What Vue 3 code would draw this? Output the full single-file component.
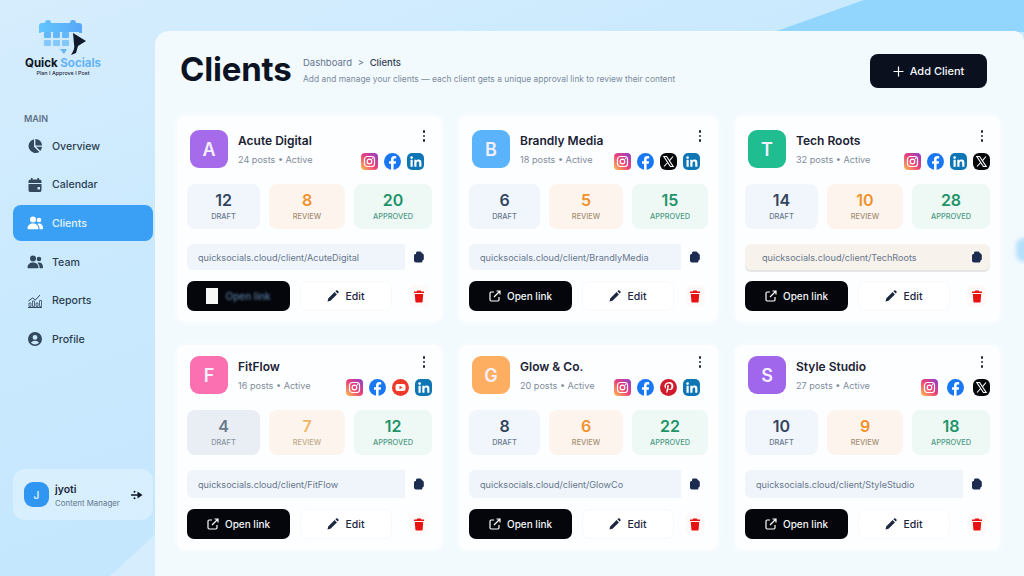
<script setup>
import { ref } from 'vue'

defineOptions({
  name: 'ClientsView'
})

const navItems = ref([
  { label: 'Overview', icon: 'pie' },
  { label: 'Calendar', icon: 'calendar' },
  { label: 'Clients', icon: 'users', active: true },
  { label: 'Team', icon: 'users' },
  { label: 'Reports', icon: 'chart' },
  { label: 'Profile', icon: 'profile' }
])

const clients = ref([
  { name: 'Acute Digital', letter: 'A', color: '#a56bea', posts: 24, draft: 12, review: 8, approved: 20, slug: 'AcuteDigital', socials: ['ig', 'fb', 'li'], inset: true, garbled: true },
  { name: 'Brandly Media', letter: 'B', color: '#5bb4fb', posts: 18, draft: 6, review: 5, approved: 15, slug: 'BrandlyMedia', socials: ['ig', 'fb', 'x', 'li'], inset: true },
  { name: 'Tech Roots', letter: 'T', color: '#1fbd90', posts: 32, draft: 14, review: 10, approved: 28, slug: 'TechRoots', socials: ['ig', 'fb', 'li', 'x'], warm: true },
  { name: 'FitFlow', letter: 'F', color: '#fb70b0', posts: 16, draft: 4, review: 7, approved: 12, slug: 'FitFlow', socials: ['ig', 'fb', 'yt', 'li'], lower: true, muted: true },
  { name: 'Glow & Co.', letter: 'G', color: '#fdae60', posts: 20, draft: 8, review: 6, approved: 22, slug: 'GlowCo', socials: ['ig', 'fb', 'pin', 'li'], inset: true, lower: true },
  { name: 'Style Studio', letter: 'S', color: '#a066ec', posts: 27, draft: 10, review: 9, approved: 18, slug: 'StyleStudio', socials: ['ig', 'fb', 'x'], lower: true, wide: true }
])
</script>

<template>
  <div class="page">
    <div class="blob"></div>

    <!-- Sidebar -->
    <aside class="sidebar">
      <div class="logo">
        <svg class="logo-mark" width="50" height="36" viewBox="0 0 50 36">
          <defs>
            <linearGradient id="logoBlue" x1="0" y1="0" x2="1" y2="0">
              <stop offset="0" stop-color="#62c6fd" />
              <stop offset="1" stop-color="#58a6f8" />
            </linearGradient>
          </defs>
          <path d="M1 6c0-2 1-3 3-3h3c0-2 1-3 3-3s3 1 3 3h19c0-2 1-3 3-3s3 1 3 3h3c2 0 3 1 3 3v7H1z" fill="url(#logoBlue)" />
          <path d="M3 12h38v15H26l-5 6-2-6H9c-3 0-6-3-6-6z" fill="#cfeafe" />
          <g fill="#62b6fa">
            <rect x="6" y="12" width="7" height="6" rx="1" />
            <rect x="15" y="12" width="7" height="6" rx="1" />
            <rect x="24" y="12" width="7" height="6" rx="1" />
            <rect x="6" y="20" width="7" height="6" rx="1" fill="#82c8fb" />
            <rect x="15" y="20" width="7" height="6" rx="1" fill="#82c8fb" />
            <rect x="24" y="20" width="7" height="6" rx="1" fill="#82c8fb" />
            <path d="M22 29h7l-3 5z" />
          </g>
          <path d="M35 13l13 8-8 5-2 7-5 2c2-3 4-7 3-11z" fill="#101a2c" />
        </svg>
        <div class="logo-name">Quick <span>Socials</span></div>
        <div class="logo-tag">Plan I Approve I Post</div>
      </div>

      <div class="nav-label">MAIN</div>
      <nav class="nav">
        <a v-for="item in navItems" :key="item.label" class="nav-item" :class="{ active: item.active }">
          <svg class="nav-icon" width="16" height="16" viewBox="0 0 16 16" fill="currentColor">
            <template v-if="item.icon === 'pie'">
              <path d="M7 1.2v7.6l5.4 5.1A7 7 0 1 1 7 1.2z" />
              <path d="M8.4 1a6.6 6.6 0 0 1 6.6 6.4H8.4z" />
              <path d="M9.2 8.8H15a7 7 0 0 1-1.7 4.1z" />
            </template>
            <template v-else-if="item.icon === 'calendar'">
              <path d="M4 1h1.6v1.6h4.8V1H12v1.6h.6c1 0 1.9.8 1.9 1.8V6h-13V4.400c0-1 .9-1.800 1.900-1.800H4z" />
              <path d="M1.500 7h13v6.200c0 1-.9 1.800-1.900 1.800H3.400c-1 0-1.900-.8-1.900-1.800zM10.500 10v2.500H13V10z" />
            </template>
            <template v-else-if="item.icon === 'users'">
              <circle cx="6" cy="4.500" r="3" />
              <circle cx="12" cy="5" r="2.300" />
              <path d="M.5 13.500C.5 10.500 2.800 8.500 6 8.500s5.500 2 5.500 5c0 .5-.3.8-.8.8H1.300c-.5 0-.8-.3-.8-.8z" />
              <path d="M12.600 14.300c.2-2-.5-4-2.100-5.400.5-.3 1-.4 1.700-.4 2.200 0 3.800 1.700 3.800 4.700 0 .6-.3 1.100-.9 1.100z" />
            </template>
            <template v-else-if="item.icon === 'chart'">
              <path d="M1 14h14v1H1z" />
              <path d="M2 10h2v3.400H2zM5.500 8h2v5.400h-2zM9 10h2v3.400H9zM12.500 7.500h2v5.900h-2z" fill="none" stroke="currentColor" stroke-width=".8" />
              <path d="M1.500 8l4-3 3 2 4.500-5" fill="none" stroke="currentColor" stroke-width="1" />
            </template>
            <template v-else>
              <path d="M8 1a7 7 0 1 0 0 14A7 7 0 0 0 8 1zm0 3a2.400 2.400 0 1 1 0 4.800A2.400 2.400 0 0 1 8 4zm0 9.500a5.500 5.500 0 0 1-4-1.800c.6-1.300 2.200-2 4-2s3.400.7 4 2a5.500 5.500 0 0 1-4 1.800z" />
            </template>
          </svg>
          <span>{{ item.label }}</span>
        </a>
      </nav>

      <div class="me">
        <div class="me-avatar">J</div>
        <div class="me-text">
          <strong>jyoti</strong>
          <span>Content Manager</span>
        </div>
        <svg class="me-arrow" width="12" height="12" viewBox="0 0 12 12" fill="#111827">
          <path d="M0 5.200h6.500V2.500L11.500 6 6.500 9.500V6.800H0z" />
          <circle cx="3.500" cy="2.800" r="1" />
          <circle cx="3.500" cy="9.200" r="1" />
        </svg>
      </div>
    </aside>

    <!-- Main panel -->
    <main class="panel">
      <header class="top">
        <h1>Clients</h1>
        <div class="top-text">
          <div class="crumbs">Dashboard <i>&gt;</i> <b>Clients</b></div>
          <p>Add and manage your clients — each client gets a unique approval link to review their content</p>
        </div>
        <button class="add-btn">
          <svg width="11" height="11" viewBox="0 0 11 11"><path d="M5.500 .5v10M.5 5.500h10" stroke="#fff" stroke-width="1.200" /></svg>
          Add Client
        </button>
      </header>

      <section class="grid">
        <article v-for="c in clients" :key="c.slug" class="card" :class="{ lower: c.lower }">
          <span class="dots"><i></i><i></i><i></i></span>

          <div class="head">
            <div class="avatar" :style="{ background: c.color }">{{ c.letter }}</div>
            <div class="info">
              <h3>{{ c.name }}</h3>
              <p>{{ c.posts }} posts • Active</p>
            </div>
            <div class="socials" :class="{ inset: c.inset, wide: c.wide }">
              <svg v-for="s in c.socials" :key="s" width="17" height="17" viewBox="0 0 17 17">
                <template v-if="s === 'ig'">
                  <defs>
                    <linearGradient :id="'ig' + c.slug" x1="0" y1="1" x2="1" y2="0">
                      <stop offset="0" stop-color="#fdc24f" />
                      <stop offset=".5" stop-color="#ec3f79" />
                      <stop offset="1" stop-color="#8a3fd0" />
                    </linearGradient>
                  </defs>
                  <rect width="17" height="17" rx="4" :fill="'url(#ig' + c.slug + ')'" />
                  <rect x="3.500" y="3.500" width="10" height="10" rx="2.800" fill="none" stroke="#fff" stroke-width="1.200" />
                  <circle cx="8.500" cy="8.500" r="2.300" fill="none" stroke="#fff" stroke-width="1.200" />
                  <circle cx="11.500" cy="5.500" r=".7" fill="#fff" />
                </template>
                <template v-else-if="s === 'fb'">
                  <circle cx="8.500" cy="8.500" r="8.500" fill="#1877f2" />
                  <path d="M9.600 17v-6.300h2.100l.4-2.500H9.600V6.700c0-.8.300-1.300 1.400-1.300h1.200V3.200c-.4-.1-1.100-.2-1.900-.2-2 0-3.300 1.200-3.300 3.400v1.800H5v2.500h2v6.300z" fill="#fff" />
                </template>
                <template v-else-if="s === 'li'">
                  <rect width="17" height="17" rx="5" fill="#0f76b5" />
                  <rect x="3.500" y="6.800" width="2.200" height="7" fill="#fff" />
                  <circle cx="4.600" cy="4.600" r="1.300" fill="#fff" />
                  <path d="M7.300 6.800h2.100v1c.4-.7 1.200-1.200 2.300-1.200 1.900 0 2.700 1.200 2.700 3.100v4.100h-2.200v-3.700c0-1-.3-1.600-1.200-1.600s-1.500.7-1.500 1.700v3.600H7.300z" fill="#fff" />
                </template>
                <template v-else-if="s === 'x'">
                  <rect width="17" height="17" rx="6" fill="#06080c" />
                  <path d="M3.800 3.500h2.800l6.600 10h-2.800z" fill="none" stroke="#fff" stroke-width="1.100" />
                  <path d="M13 3.500L9.300 7.800M7.700 9.500L4 13.500" stroke="#fff" stroke-width="1.100" />
                </template>
                <template v-else-if="s === 'yt'">
                  <circle cx="8.500" cy="8.500" r="8.500" fill="#ee3a2a" />
                  <rect x="3.500" y="5" width="10" height="7" rx="2" fill="#fff" />
                  <path d="M7.500 6.800l3 1.700-3 1.700z" fill="#ee3a2a" />
                </template>
                <template v-else>
                  <circle cx="8.500" cy="8.500" r="8.500" fill="#cf1b2b" />
                  <path d="M8.800 3.200c-2.900 0-4.400 1.900-4.400 3.800 0 1 .5 2.100 1.400 2.500.3.100.3-.3.400-.6 0-.2-.4-.6-.4-1.500 0-1.500 1.200-2.800 3-2.800 1.600 0 2.600 1 2.600 2.400 0 1.800-.8 3.200-2 3.200-.7 0-1.100-.5-1-1.200.2-.8.500-1.600.5-2.200 0-1.300-1.800-1.100-1.800.6 0 .5.200.9.200.9l-.8 3.200c-.2.900 0 2 0 2.800h.2c.4-.5 1-1.600 1.200-2.300l.4-1.700c.2.400.9.800 1.600.8 2.100 0 3.500-1.900 3.500-4.400 0-2-1.700-3.700-4.200-3.700z" fill="#fff" />
                </template>
              </svg>
            </div>
          </div>

          <div class="stats" :class="{ muted: c.muted }">
            <div class="stat draft"><b>{{ c.draft }}</b><span>DRAFT</span></div>
            <div class="stat review"><b>{{ c.review }}</b><span>REVIEW</span></div>
            <div class="stat approved"><b>{{ c.approved }}</b><span>APPROVED</span></div>
          </div>

          <div class="link-row" :class="{ warm: c.warm }">
            <div class="link">quicksocials.cloud/client/{{ c.slug }}</div>
            <button class="copy">
              <svg width="12" height="12" viewBox="0 0 12 12" fill="#1c2c50">
                <path d="M4.500 .6h3L10.800 3.800V8c0 .8-.6 1.400-1.400 1.400v.8c0 .8-.7 1.400-1.500 1.400H3c-1.100 0-2-.9-2-2V4.500c0-.9.700-1.600 1.600-1.600h.4V2.100C3 1.200 3.700.6 4.500.6z" />
              </svg>
            </button>
          </div>

          <div class="actions">
            <button class="open" :class="{ garbled: c.garbled }">
              <span v-if="c.garbled" class="glitch-box"></span>
              <svg v-else width="12" height="12" viewBox="0 0 12 12" fill="none" stroke="#fff" stroke-width="1.200">
                <path d="M5 2H2.200C1.500 2 1 2.500 1 3.200v6.600c0 .7.500 1.200 1.200 1.200h6.600c.7 0 1.200-.5 1.200-1.200V7" />
                <path d="M5 7l6-6M7.500 1H11v3.500" />
              </svg>
              <span class="open-label">Open link</span>
            </button>
            <button class="edit">
              <svg width="12" height="12" viewBox="0 0 12 12" fill="#1c2740">
                <path d="M.5 11.500l.7-3L7.600 2.100l2.300 2.300L3.500 10.800zM8.400 1.300l.8-.8c.4-.3.900-.3 1.200 0l1.100 1.100c.3.300.3.800 0 1.200l-.8.800z" />
              </svg>
              Edit
            </button>
            <button class="trash">
              <svg width="12" height="13" viewBox="0 0 12 13" fill="#e81212">
                <path d="M4.200 .5h3.600l.5 1H11v1.500H1V1.500h2.700z" />
                <path d="M1.800 4h8.400l-.6 7.700c0 .4-.4.800-.8.800H3.200c-.4 0-.8-.4-.8-.8z" />
              </svg>
            </button>
          </div>
        </article>
      </section>
    </main>
  </div>
</template>

<style>
html, body {
  margin: 0;
  overflow: hidden;
}
</style>

<style scoped>
.page {
  position: relative;
  display: flex;
  width: 1024px;
  height: 576px;
  overflow: hidden;
  font-family: 'Inter', 'Liberation Sans', sans-serif;
  color: #0f172a;
  background: linear-gradient(160deg, #d6edfd 0%, #c9e9fe 35%, #c0e5fd 100%);
}

/* top right diagonal + bottom left wedge */
.page::before {
  content: '';
  position: absolute;
  top: 0;
  right: 0;
  width: 250px;
  height: 32px;
  background: #92d6fd;
  clip-path: polygon(0 100%, 36% 0, 100% 0, 100% 100%);
}
.page::after {
  content: '';
  position: absolute;
  left: 110px;
  bottom: 0;
  width: 50px;
  height: 46px;
  background: rgba(255, 255, 255, 0.28);
  clip-path: polygon(0 100%, 100% 0, 100% 100%);
}

.blob {
  position: absolute;
  z-index: 3;
  right: -8px;
  top: 238px;
  width: 16px;
  height: 24px;
  border-radius: 8px;
  background: #b4e0fb;
  filter: blur(2px);
}

/* Sidebar */
.sidebar {
  position: relative;
  z-index: 1;
  flex: 0 0 155px;
  box-sizing: border-box;
  display: flex;
  flex-direction: column;
  padding: 20px 2px 56px 13px;
}
.logo {
  display: flex;
  flex-direction: column;
  align-items: center;
  width: 100px;
}
.logo-mark {
  display: block;
}
.logo-name {
  font-size: 11.5px;
  line-height: 13px;
  font-weight: 700;
  color: #0c1322;
  margin-top: 1px;
  white-space: nowrap;
}
.logo-name span {
  color: #62b3f5;
}
.logo-tag {
  font-size: 5.4px;
  line-height: 7px;
  font-weight: 500;
  color: #1e293b;
  white-space: nowrap;
}
.nav-label {
  margin: 36px 0 0 11px;
  font-size: 9px;
  line-height: 12px;
  font-weight: 600;
  color: #5d7285;
}
.nav {
  display: flex;
  flex-direction: column;
  gap: 2.7px;
  margin-top: 3px;
}
.nav-item {
  display: flex;
  align-items: center;
  gap: 9px;
  height: 36px;
  padding-left: 14px;
  border-radius: 8px;
  font-size: 10.6px;
  font-weight: 500;
  color: #2c3e50;
}
.nav-item.active {
  background: #3aa0f5;
  color: #e8f5ff;
}
.nav-icon {
  flex: none;
  color: #34495e;
}
.nav-item.active .nav-icon {
  color: #fff;
}
.me {
  display: flex;
  align-items: center;
  gap: 6px;
  margin-top: auto;
  height: 51px;
  box-sizing: border-box;
  padding: 0 10px 0 11px;
  border-radius: 12px;
  background: rgba(255, 255, 255, 0.3);
}
.me-avatar {
  flex: none;
  display: flex;
  align-items: center;
  justify-content: center;
  width: 25px;
  height: 25px;
  border-radius: 9px;
  background: #2f97f1;
  color: #dff1ff;
  font-size: 10px;
  font-weight: 600;
}
.me-text {
  display: flex;
  flex-direction: column;
  flex: 1;
  min-width: 0;
  padding-top: 2px;
}
.me-text strong {
  font-size: 10.5px;
  line-height: 14px;
  font-weight: 600;
  color: #1e293b;
}
.me-text span {
  font-size: 7.9px;
  line-height: 12px;
  color: #64788c;
  white-space: nowrap;
}

/* Main panel */
.panel {
  position: relative;
  z-index: 2;
  flex: 1;
  margin-top: 31px;
  padding: 0 24px 0 22px;
  border-radius: 14px 10px 0 0;
  background: #f3fafe;
  box-sizing: border-box;
}
.top {
  display: flex;
  align-items: center;
  height: 85px;
  padding: 0 13px 5px 3px;
  box-sizing: border-box;
}
.top h1 {
  margin: 0 0 4px;
  width: 123px;
  font-size: 33px;
  line-height: 40px;
  font-weight: 700;
  letter-spacing: -0.2px;
  color: #0c1424;
}
.top-text {
  flex: 1;
}
.crumbs {
  font-size: 9.5px;
  line-height: 12px;
  color: #64748b;
}
.crumbs i {
  font-style: normal;
  margin: 0 3px;
}
.crumbs b {
  font-weight: 500;
  color: #334155;
}
.top-text p {
  margin: 5px 0 0;
  font-size: 8.42px;
  line-height: 11px;
  color: #7b8a9c;
  white-space: nowrap;
}
.add-btn {
  display: flex;
  align-items: center;
  justify-content: center;
  gap: 6px;
  width: 117px;
  height: 34px;
  border: 0;
  border-radius: 8px;
  background: #0a101e;
  color: #f3f6fa;
  font: 500 11px 'Inter', sans-serif;
}

/* Cards */
.grid {
  display: grid;
  grid-template-columns: 265px 259px 265px;
  column-gap: 17px;
  row-gap: 23px;
}
.card {
  position: relative;
  box-sizing: border-box;
  padding: 14px 10px 11px;
  border-radius: 8px;
  background: #fdfeff;
  box-shadow: 0 0 6px rgba(255, 255, 255, 0.7);
}
.card.lower {
  padding-top: 11px;
}
.dots {
  position: absolute;
  top: 14px;
  right: 17px;
  display: flex;
  flex-direction: column;
  gap: 2px;
}
.card.lower .dots {
  top: 11px;
}
.dots i {
  width: 2.5px;
  height: 2.5px;
  border-radius: 50%;
  background: #1e293b;
}
.head {
  display: flex;
  padding-left: 3px;
  height: 38px;
}
.avatar {
  flex: none;
  display: flex;
  align-items: center;
  justify-content: center;
  width: 38px;
  height: 38px;
  border-radius: 9px;
  color: #f4f0ff;
  font-size: 18px;
  font-weight: 600;
}
.info {
  margin-left: 10px;
  padding-top: 3px;
}
.info h3 {
  margin: 0;
  font-size: 12px;
  line-height: 16px;
  font-weight: 600;
  color: #1a2233;
  white-space: nowrap;
}
.info p {
  margin: 5px 0 0;
  font-size: 9.1px;
  line-height: 12px;
  color: #7f8c9b;
  white-space: nowrap;
}
.socials {
  display: flex;
  gap: 6px;
  margin-left: auto;
  align-self: flex-end;
  margin-bottom: -2px;
}
.socials.inset {
  margin-right: 8px;
}
.socials.wide {
  gap: 9px;
}
.socials svg {
  display: block;
}
.stats {
  display: grid;
  grid-template-columns: 73fr 76fr 78fr;
  gap: 9px;
  margin-top: 16px;
}
.stat {
  display: flex;
  flex-direction: column;
  align-items: center;
  height: 45px;
  padding-top: 7px;
  box-sizing: border-box;
  border-radius: 8px;
}
.stat b {
  font-size: 16px;
  line-height: 18px;
  font-weight: 600;
}
.stat span {
  margin-top: 3px;
  font-size: 7.4px;
  line-height: 10px;
  font-weight: 500;
}
.draft {
  background: #f1f6fc;
}
.draft b {
  color: #33455e;
}
.draft span {
  color: #6a7a8c;
}
.review {
  background: #fdf5ed;
}
.review b {
  color: #ef922d;
}
.review span {
  color: #a48e74;
}
.approved {
  background: #eef9f6;
}
.approved b {
  color: #1f9468;
}
.approved span {
  color: #4f9a84;
}
.muted .draft {
  background: #e9eef4;
}
.muted .draft b {
  color: #6b7a8c;
}
.muted .draft span {
  color: #8a96a4;
}
.muted .review b {
  color: #eeb469;
}
.muted .review span {
  color: #bfa98a;
}
.link-row {
  display: flex;
  align-items: stretch;
  height: 26px;
  margin-top: 15px;
}
.card.lower .link-row {
  height: 28px;
}
.link {
  flex: 1;
  display: flex;
  align-items: center;
  padding-left: 11px;
  border-radius: 6px 0 0 6px;
  background: #f0f5fc;
  font-size: 9.1px;
  color: #67768a;
  white-space: nowrap;
}
.copy {
  flex: 0 0 27px;
  display: flex;
  align-items: center;
  justify-content: center;
  padding: 0;
  border: 0;
  background: transparent;
}
.link-row.warm {
  border-radius: 6px;
  background: #f7f2ec;
  box-shadow: 0 2px 1px rgba(120, 110, 100, 0.18);
}
.link-row.warm .link {
  background: transparent;
  padding-left: 17px;
}
.actions {
  display: flex;
  align-items: center;
  height: 30px;
  margin-top: 11px;
}
.open {
  flex: 0 0 103px;
  display: flex;
  align-items: center;
  justify-content: center;
  gap: 6px;
  height: 30px;
  padding: 0;
  border: 0;
  border-radius: 7px;
  background: #04060b;
  color: #f2f5f9;
  font: 500 10px 'Inter', sans-serif;
}
.glitch-box {
  width: 12px;
  height: 16px;
  background: #f7f7f5;
}
.open.garbled {
  gap: 7px;
}
.open.garbled .open-label {
  color: #5a7ba0;
  filter: blur(1px);
}
.edit {
  flex: 0 0 92px;
  display: flex;
  align-items: center;
  justify-content: center;
  gap: 6px;
  height: 30px;
  margin-left: 10px;
  padding: 0;
  border: 1px solid #f7f9fb;
  border-radius: 7px;
  background: #fff;
  color: #1c2740;
  font: 500 10.5px 'Inter', sans-serif;
}
.trash {
  display: flex;
  align-items: center;
  justify-content: center;
  width: 20px;
  height: 22px;
  margin-left: auto;
  margin-right: 3px;
  padding: 0;
  border: 0;
  border-radius: 5px;
  background: #fefafa;
}
</style>
